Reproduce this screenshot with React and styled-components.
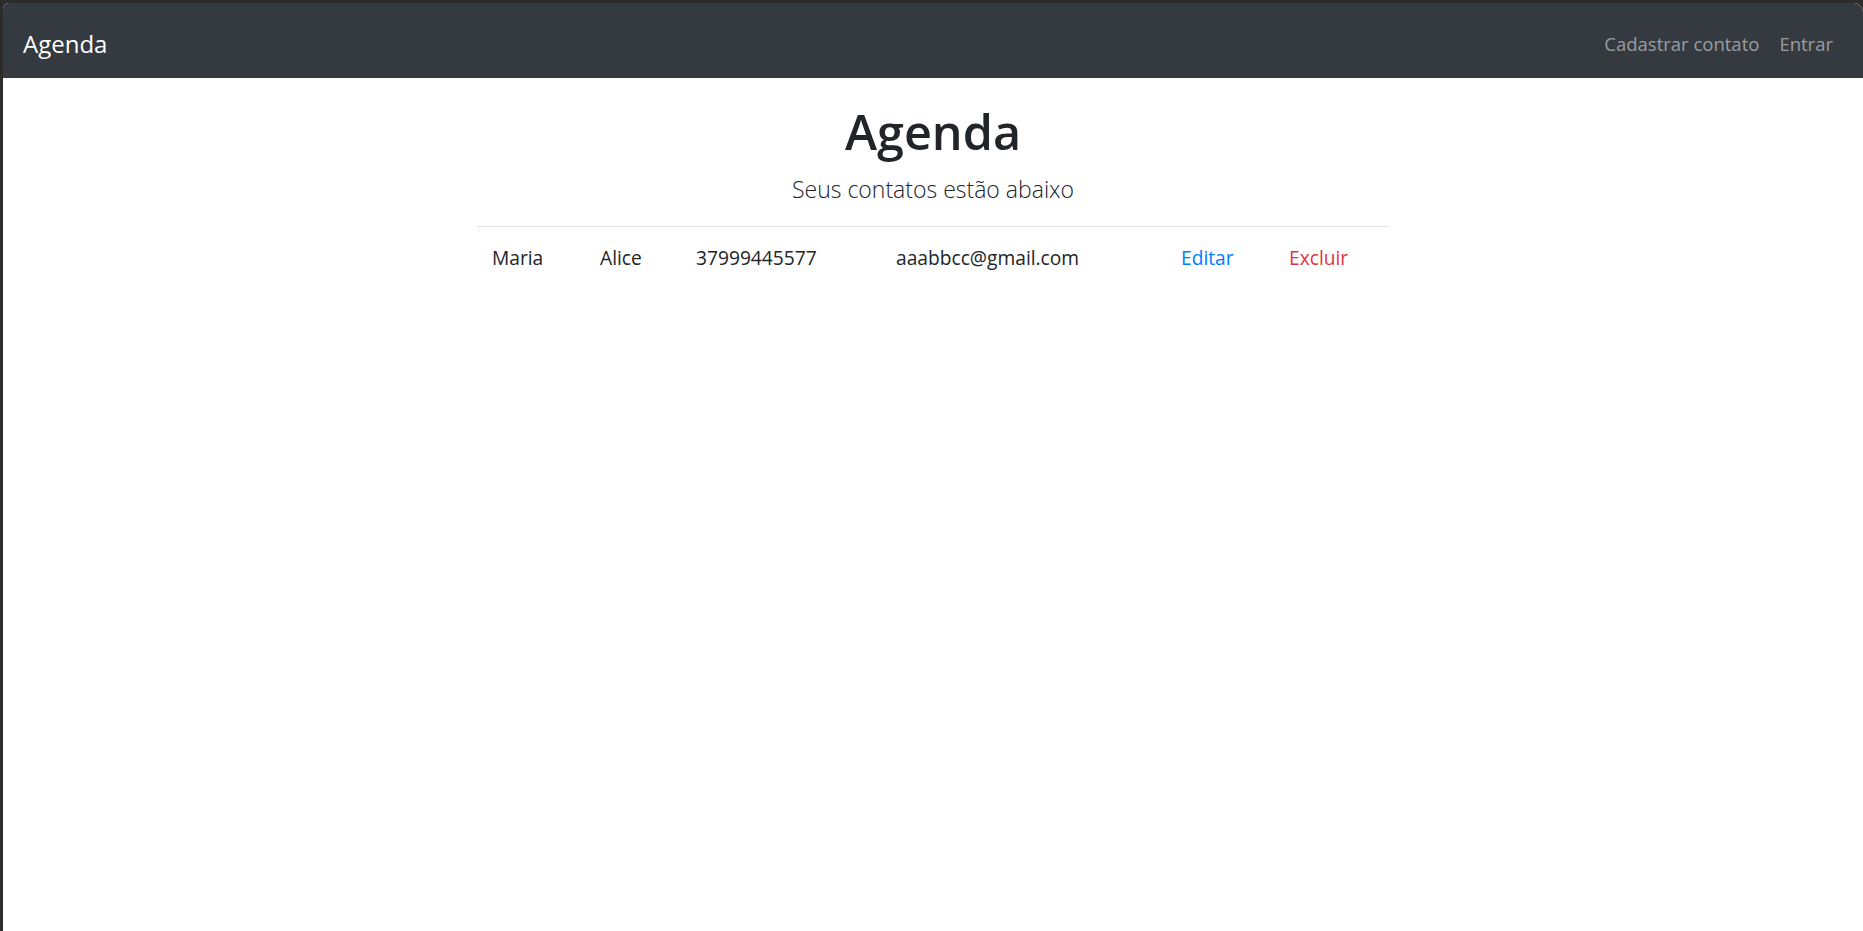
import React from 'react';
import styled, { createGlobalStyle } from 'styled-components';

const contacts = [
  { nome: 'Maria', sobrenome: 'Alice', telefone: '37999445577', email: 'aaabbcc@gmail.com' }
];

const GlobalStyle = createGlobalStyle`
  html, body {
    margin: 0;
    padding: 0;
    height: 100%;
    background: #2c2c2c;
  }

  body {
    font-family: "Open Sans", "Noto Sans", sans-serif;
    color: #212529;
  }

  * {
    box-sizing: border-box;
  }
`;

function App() {
  return (
    <>
      <GlobalStyle />
      <Frame>
        <Navbar>
          <Brand href='#'>Agenda</Brand>
          <NavLinks>
            <NavLink href='#'>Cadastrar contato</NavLink>
            <NavLink href='#'>Entrar</NavLink>
          </NavLinks>
        </Navbar>

        <Main>
          <Title>Agenda</Title>
          <Lead>Seus contatos estão abaixo</Lead>

          <Table>
            <colgroup>
              <col style={{ width: 108 }} />
              <col style={{ width: 96 }} />
              <col style={{ width: 200 }} />
              <col style={{ width: 285 }} />
              <col style={{ width: 108 }} />
              <col style={{ width: 115 }} />
            </colgroup>
            <tbody>
              {contacts.map(contact => (
                <tr key={contact.telefone}>
                  <Cell>{contact.nome}</Cell>
                  <Cell>{contact.sobrenome}</Cell>
                  <Cell>{contact.telefone}</Cell>
                  <Cell>{contact.email}</Cell>
                  <Cell>
                    <Action href='#' color='#007bff'>Editar</Action>
                  </Cell>
                  <Cell>
                    <Action href='#' color='#dc3545'>Excluir</Action>
                  </Cell>
                </tr>
              ))}
            </tbody>
          </Table>
        </Main>
      </Frame>
    </>
  );
}

const Frame = styled.div`
  display: flex;
  flex-direction: column;
  min-height: calc(100vh - 3px);
  margin: 3px 0 0 3px;
  background: #fff;
  border-radius: 6px 9px 0 0;
  overflow: hidden;
`;

const Navbar = styled.nav`
  display: flex;
  align-items: center;
  justify-content: space-between;
  height: 75px;
  padding: 7px 20px 0;
  background: #343a40;
`;

const Brand = styled.a`
  color: #fff;
  font-size: 24px;
  line-height: 1.5;
  text-decoration: none;
`;

const NavLinks = styled.div`
  display: flex;
`;

const NavLink = styled.a`
  padding: 0 10px;
  color: rgba(255, 255, 255, .5);
  font-size: 18.5px;
  line-height: 1.5;
  text-decoration: none;
`;

const Main = styled.main`
  display: flex;
  flex-direction: column;
  align-items: center;
  padding-top: 23px;
`;

const Title = styled.h1`
  margin: 0 0 10px;
  font-size: 48.5px;
  font-weight: 600;
  line-height: 1.24;
`;

const Lead = styled.p`
  margin: 0 0 18px;
  font-size: 23px;
  font-weight: 300;
  line-height: 1.6;
`;

const Table = styled.table`
  width: 912px;
  border-collapse: collapse;
  table-layout: fixed;
`;

const Cell = styled.td`
  padding: 16px 15px 14px;
  border-top: 1px solid #dee2e6;
  font-size: 19.2px;
  line-height: 1.55;
  white-space: nowrap;
`;

const Action = styled.a`
  color: ${props => props.color};
  text-decoration: none;
`;

export default App;
